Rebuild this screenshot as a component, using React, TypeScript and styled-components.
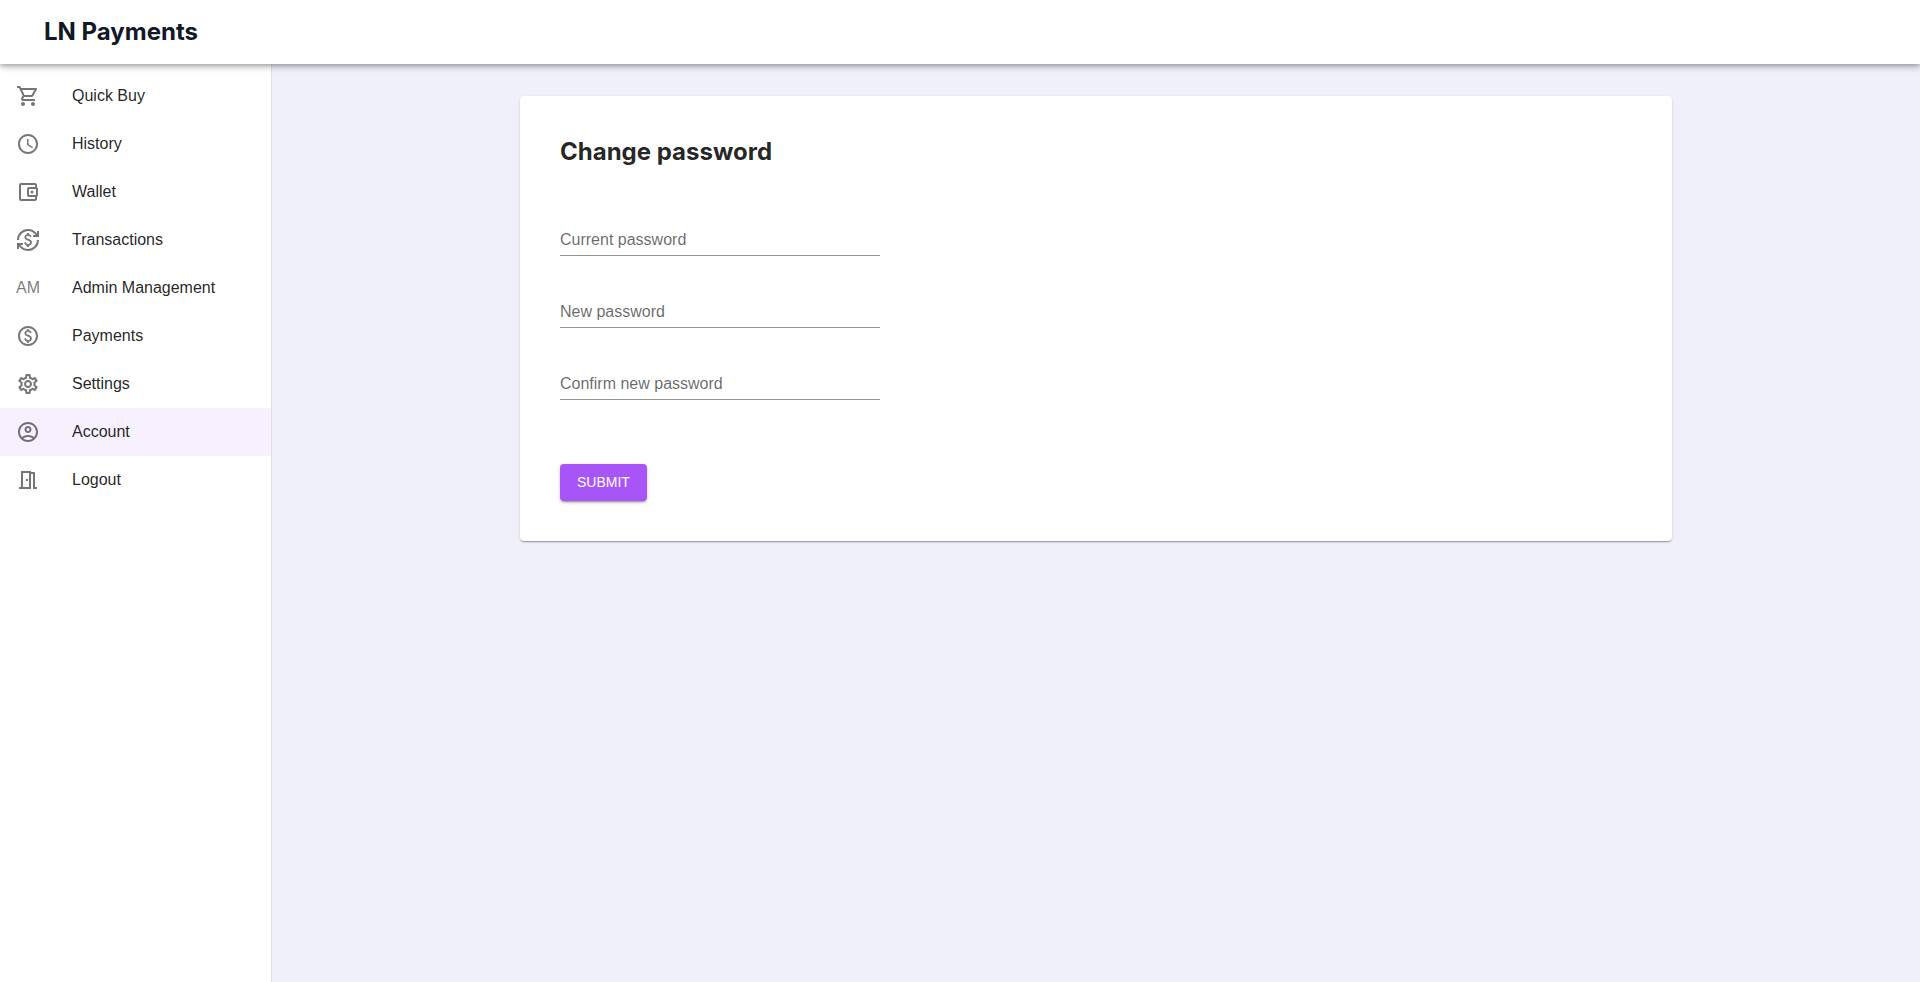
import React from 'react';
import styled, { createGlobalStyle } from 'styled-components';
import {
  MdAccessTime,
  MdCurrencyExchange,
  MdOutlineAccountBalanceWallet,
  MdOutlineAccountCircle,
  MdOutlineMeetingRoom,
  MdOutlinePaid,
  MdOutlineSettings,
  MdOutlineShoppingCart,
} from 'react-icons/md';

const GlobalStyle = createGlobalStyle`
  *, *::before, *::after { box-sizing: border-box; }
  body {
    margin: 0;
    font-family: "Liberation Sans", Arial, sans-serif;
    font-size: 16px;
    line-height: 24px;
    color: rgba(0, 0, 0, 0.87);
    -webkit-font-smoothing: antialiased;
  }
`;

const Page = styled.div`
  display: flex;
  flex-direction: column;
  min-height: 100vh;
`;

const TopBar = styled.header`
  position: relative;
  z-index: 1;
  display: flex;
  align-items: center;
  height: 64px;
  padding: 0 44px;
  background: #fff;
  box-shadow:
    0 2px 4px -1px rgba(0, 0, 0, 0.2),
    0 4px 5px 0 rgba(0, 0, 0, 0.14),
    0 1px 10px 0 rgba(0, 0, 0, 0.12);
`;

const Brand = styled.a`
  font: 700 24px/32px Inter, sans-serif;
  color: #111827;
  text-decoration: none;
`;

const Body = styled.div`
  display: flex;
  flex: 1;
`;

const Sidebar = styled.nav`
  flex: 0 0 272px;
  padding: 8px 0;
  background: #fff;
  border-right: 1px solid rgba(0, 0, 0, 0.12);
`;

const NavList = styled.ul`
  margin: 0;
  padding: 0;
  list-style: none;
`;

const NavLink = styled.a<{ $active?: boolean }>`
  display: flex;
  align-items: center;
  height: 48px;
  padding: 0 16px;
  color: inherit;
  text-decoration: none;
  background: ${({ $active }) => ($active ? '#f7f0ff' : 'transparent')};
`;

const NavIcon = styled.span`
  display: flex;
  flex: 0 0 56px;
  color: rgba(0, 0, 0, 0.54);

  svg {
    width: 24px;
    height: 24px;
  }
`;

const Main = styled.main`
  flex: 1;
  min-width: 0;
  padding: 32px;
  background: #f0f0fa;
`;

const Card = styled.section`
  max-width: 1152px;
  margin: 0 auto;
  padding: 40px;
  background: #fff;
  border-radius: 4px;
  box-shadow:
    0 2px 1px -1px rgba(0, 0, 0, 0.2),
    0 1px 1px 0 rgba(0, 0, 0, 0.14),
    0 1px 3px 0 rgba(0, 0, 0, 0.12);
`;

const Title = styled.h1`
  margin: 0 0 40px;
  font: 700 24px/32px Inter, sans-serif;
`;

const Form = styled.form`
  display: flex;
  flex-direction: column;
  align-items: flex-start;
  gap: 64px;
`;

const Fields = styled.div`
  display: flex;
  flex-direction: column;
  gap: 24px;
  width: 320px;
  max-width: 100%;
`;

const Field = styled.div`
  display: grid;
  padding-top: 16px;
`;

const FieldInput = styled.input`
  grid-area: 1 / 1;
  height: 32px;
  padding: 0 0 4px;
  border: 0;
  border-bottom: 1px solid rgba(0, 0, 0, 0.42);
  border-radius: 0;
  outline: 0;
  font: inherit;
  color: inherit;
  background: transparent;

  &:focus {
    border-color: #a855f7;
  }
`;

const FieldLabel = styled.label`
  grid-area: 1 / 1;
  padding-top: 4px;
  color: rgba(0, 0, 0, 0.6);
  pointer-events: none;

  ${FieldInput}:focus + &,
  ${FieldInput}:not(:placeholder-shown) + & {
    margin-top: -24px;
    font-size: 12px;
  }
`;

const SubmitButton = styled.button`
  padding: 6px 17px 7px;
  border: 0;
  border-radius: 4px;
  font: 500 14px/24px "Liberation Sans", Arial, sans-serif;
  text-transform: uppercase;
  color: #fff;
  background: #a855f7;
  cursor: pointer;
  box-shadow:
    0 3px 1px -2px rgba(0, 0, 0, 0.2),
    0 2px 2px 0 rgba(0, 0, 0, 0.14),
    0 1px 5px 0 rgba(0, 0, 0, 0.12);
`;

const navItems: { label: string; icon: React.ReactNode; active?: boolean }[] = [
  { label: 'Quick Buy', icon: <MdOutlineShoppingCart /> },
  { label: 'History', icon: <MdAccessTime /> },
  { label: 'Wallet', icon: <MdOutlineAccountBalanceWallet /> },
  { label: 'Transactions', icon: <MdCurrencyExchange /> },
  { label: 'Admin Management', icon: 'AM' },
  { label: 'Payments', icon: <MdOutlinePaid /> },
  { label: 'Settings', icon: <MdOutlineSettings /> },
  { label: 'Account', icon: <MdOutlineAccountCircle />, active: true },
  { label: 'Logout', icon: <MdOutlineMeetingRoom /> },
];

const passwordFields = [
  { id: 'current-password', label: 'Current password', autoComplete: 'current-password' },
  { id: 'new-password', label: 'New password', autoComplete: 'new-password' },
  { id: 'confirm-password', label: 'Confirm new password', autoComplete: 'new-password' },
];

export default function App() {
  return (
    <Page>
      <GlobalStyle />
      <TopBar>
        <Brand href="#">LN Payments</Brand>
      </TopBar>
      <Body>
        <Sidebar>
          <NavList>
            {navItems.map(({ label, icon, active }) => (
              <li key={label}>
                <NavLink href="#" $active={active} aria-current={active ? 'page' : undefined}>
                  <NavIcon aria-hidden="true">{icon}</NavIcon>
                  {label}
                </NavLink>
              </li>
            ))}
          </NavList>
        </Sidebar>
        <Main>
          <Card>
            <Title>Change password</Title>
            <Form onSubmit={(event) => event.preventDefault()}>
              <Fields>
                {passwordFields.map(({ id, label, autoComplete }) => (
                  <Field key={id}>
                    <FieldInput id={id} type="password" placeholder=" " autoComplete={autoComplete} />
                    <FieldLabel htmlFor={id}>{label}</FieldLabel>
                  </Field>
                ))}
              </Fields>
              <SubmitButton type="submit">Submit</SubmitButton>
            </Form>
          </Card>
        </Main>
      </Body>
    </Page>
  );
}
